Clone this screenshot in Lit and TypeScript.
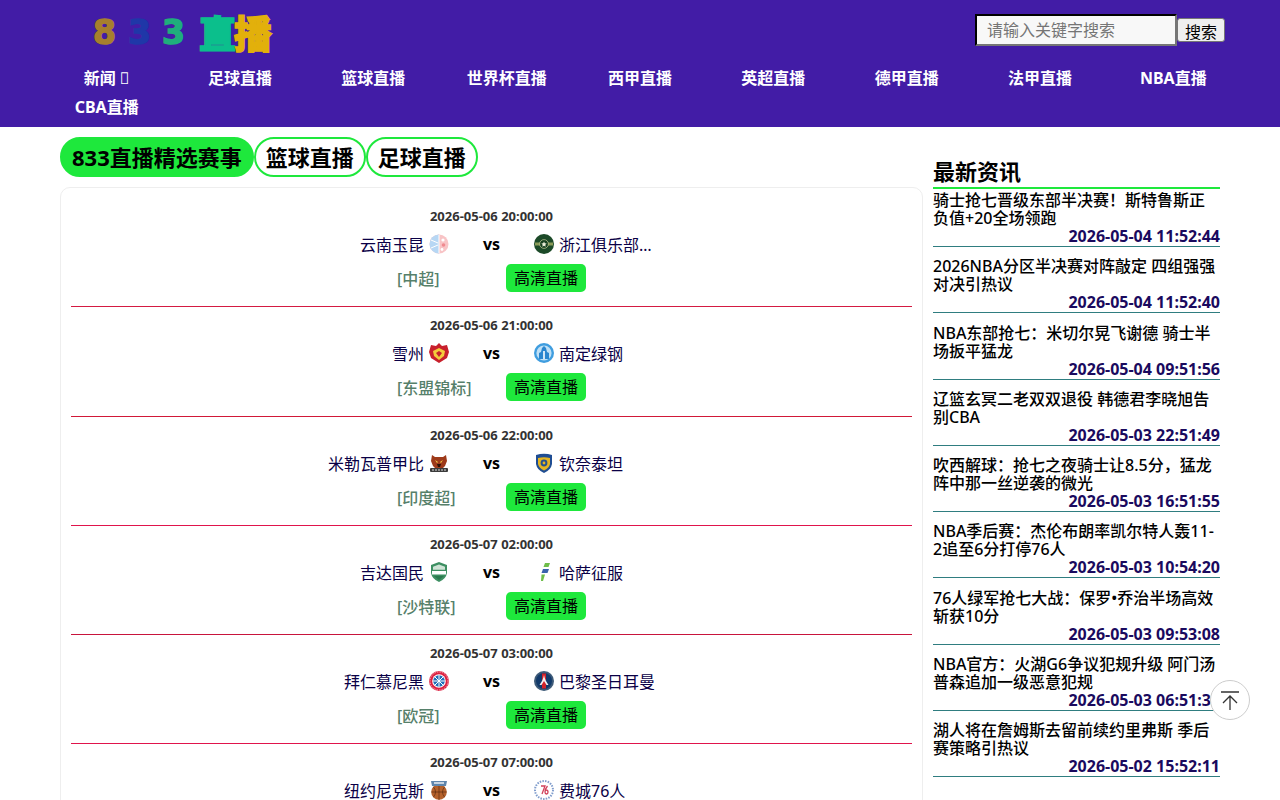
import { LitElement, html, css, svg } from "lit";
import { customElement } from "lit/decorators.js";

const crests: Record<string, unknown> = {
  yunnan: svg`<circle cx="10" cy="10" r="9.5" fill="#f8c4c6"/><path d="M10 .5a9.5 9.5 0 0 0 0 19z" fill="#b7d7f4"/><path d="M10 1v18M2 6l7 3M2 14l7-3" stroke="#fff" fill="none"/><circle cx="14" cy="6" r="1.6" fill="#fff"/><circle cx="14.5" cy="11" r="1.8" fill="#f08a90"/><circle cx="13" cy="15.5" r="1.4" fill="#fff"/>`,
  zhejiang: svg`<circle cx="10" cy="10" r="10" fill="#1c4a28"/><path d="M1 8.5h18v3H1z" fill="#8a9a58"/><circle cx="10" cy="10" r="4.4" fill="#16401f" stroke="#c9cf9a" stroke-width=".7"/><path d="M10 7.5l.8 1.8 1.9.2-1.4 1.3.4 1.9-1.7-1-1.7 1 .4-1.9-1.4-1.3 1.9-.2z" fill="#eef0da"/>`,
  selangor: svg`<path d="M10 0l3 3 5-1 2 7-2 6-8 5-8-5-2-6 2-7 5 1z" fill="#c8202c"/><path d="M10 5l6 3-1 5-5 4-5-4-1-5z" fill="#f3cb3c"/><path d="M10 8l3 2-3 4-3-4z" fill="#c8202c"/>`,
  namdinh: svg`<circle cx="10" cy="10" r="10" fill="#3f9ddf"/><circle cx="10" cy="10" r="7.6" fill="#bfe0f6"/><path d="M5 16V10l2-1 1-4 2-2 2 2 1 4 2 1v6z" fill="#2b86cf"/><path d="M9.2 16V8h1.6v8z" fill="#fff"/>`,
  mumbai: svg`<path d="M3 2l3 2h8l3-2 1 6-2 5-2 2H6l-2-2-2-5z" fill="#9e3a1a"/><path d="M6 7l3 2-1 1zM14 7l-3 2 1 1z" fill="#f5d24a"/><path d="M8 11h4l-1 3H9z" fill="#2a1208"/><rect x="1" y="15" width="18" height="4" rx="1" fill="#3b3b3b"/><path d="M3 17h14" stroke="#ddd" stroke-width="1" stroke-dasharray="2 1"/>`,
  chennai: svg`<path d="M2 2q8-2.5 16 0v9q-1 6-8 9-7-3-8-9z" fill="#1f4d93"/><path d="M4 5q6-1.500 12 0v6q-1 4-6 6.500-5-2.500-6-6.500z" fill="#e5b522"/><circle cx="10" cy="10" r="3.4" fill="#27528f"/><circle cx="10" cy="10" r="1.400" fill="#e5b522"/>`,
  jeddah: svg`<path d="M10 0l8 3v8q-1 6-8 9-7-3-8-9V3z" fill="#3d8f62"/><path d="M10 2.500l6 2.200v3H4v-3z" fill="#cfe3d6"/><rect x="3" y="9" width="14" height="3.500" fill="#fff"/><path d="M5 14h10l-5 4z" fill="#2a7a4e"/>`,
  kazakh: svg`<path d="M11 1h5l-1.500 4H9.500z" fill="#6fbe4a"/><path d="M9 7h6l-1.500 4H7.500z" fill="#3a62ad"/><path d="M7.500 12.500h3.500L9 19H7z" fill="#6fbe4a"/>`,
  bayern: svg`<circle cx="10" cy="10" r="10" fill="#dc1f3f"/><circle cx="10" cy="10" r="6.800" fill="#fff"/><circle cx="10" cy="10" r="5.800" fill="#1f6fb8"/><path d="M10 4.200v11.600M4.200 10h11.600M6 6l8 8M14 6l-8 8" stroke="#fff" stroke-width="1"/><circle cx="10" cy="10" r="9" fill="none" stroke="#f6c8d0" stroke-width=".8" stroke-dasharray="1.500 1"/>`,
  psg: svg`<circle cx="10" cy="10" r="10" fill="#3d5a78"/><circle cx="10" cy="10" r="8" fill="#123a6b"/><path d="M8 2.500h4v15H8z" fill="#d2232a"/><path d="M10 4c-.6 4-2.500 7-4.500 10h2l2.500-4 2.500 4h2C12.500 11 10.600 8 10 4z" fill="#f2f2f2"/>`,
  knicks: svg`<circle cx="10" cy="12" r="7.800" fill="#b5612b"/><path d="M2.500 12h15M10 4v16M4.500 7q4 5 0 10M15.500 7q-4 5 0 10" stroke="#5c2c10" stroke-width=".7" fill="none"/><path d="M2 1h16l-1 5H3z" fill="#5f86ad"/><path d="M5 3h10" stroke="#fff" stroke-width="1.300"/>`,
  sixers: svg`<circle cx="10" cy="10" r="9" fill="#fff" stroke="#7f9ccc" stroke-width="2" stroke-dasharray="1.500 1.200"/><path d="M7 6h4l-3 8M13.500 6q-2.500 3-2.500 6 0 2 1.500 2t1.500-2-2-2" fill="none" stroke="#d1405a" stroke-width="1.300"/>`,
};

const matches = [
  { time: "2026-05-06 20:00:00", home: "云南玉昆", hl: "yunnan", away: "浙江俱乐部绿城", al: "zhejiang", league: "中超", line: "#d41a42" },
  { time: "2026-05-06 21:00:00", home: "雪州", hl: "selangor", away: "南定绿钢", al: "namdinh", league: "东盟锦标", line: "#d11838" },
  { time: "2026-05-06 22:00:00", home: "米勒瓦普甲比", hl: "mumbai", away: "钦奈泰坦", al: "chennai", league: "印度超", line: "#e0144c" },
  { time: "2026-05-07 02:00:00", home: "吉达国民", hl: "jeddah", away: "哈萨征服", al: "kazakh", league: "沙特联", line: "#c8143c" },
  { time: "2026-05-07 03:00:00", home: "拜仁慕尼黑", hl: "bayern", away: "巴黎圣日耳曼", al: "psg", league: "欧冠", line: "#e0144c" },
  { time: "2026-05-07 07:00:00", home: "纽约尼克斯", hl: "knicks", away: "费城76人", al: "sixers", league: "NBA", line: "#e0144c" },
];

const news = [
  ["骑士抢七晋级东部半决赛！斯特鲁斯正负值+20全场领跑", "2026-05-04 11:52:44"],
  ["2026NBA分区半决赛对阵敲定 四组强强对决引热议", "2026-05-04 11:52:40"],
  ["NBA东部抢七：米切尔晃飞谢德 骑士半场扳平猛龙", "2026-05-04 09:51:56"],
  ["辽篮玄冥二老双双退役 韩德君李晓旭告别CBA", "2026-05-03 22:51:49"],
  ["吹西解球：抢七之夜骑士让8.5分，猛龙阵中那一丝逆袭的微光", "2026-05-03 16:51:55"],
  ["NBA季后赛：杰伦布朗率凯尔特人轰11-2追至6分打停76人", "2026-05-03 10:54:20"],
  ["76人绿军抢七大战：保罗•乔治半场高效斩获10分", "2026-05-03 09:53:08"],
  ["NBA官方：火湖G6争议犯规升级 阿门汤普森追加一级恶意犯规", "2026-05-03 06:51:36"],
  ["湖人将在詹姆斯去留前续约里弗斯 季后赛策略引热议", "2026-05-02 15:52:11"],
];

const navItems = ["新闻 \ue6a0", "足球直播", "篮球直播", "世界杯直播", "西甲直播", "英超直播", "德甲直播", "法甲直播", "NBA直播", "CBA直播"];

@customElement("app-root")
export class AppRoot extends LitElement {
  static styles = css`
    :host {
      display: block;
      font-family: "Noto Sans", "Noto Sans CJK SC", sans-serif;
      color: #000;
      background: #fff;
    }

    header {
      background: #421ca6;
      height: 127px;
    }

    .top {
      width: 1160px;
      height: 64px;
      margin: 0 auto;
      display: flex;
      justify-content: space-between;
      align-items: flex-start;
    }

    .logo {
      display: flex;
      align-items: center;
      height: 64px;
      margin-left: 33px;
      font-family: "DejaVu Sans", "Noto Sans CJK SC", sans-serif;
      font-weight: 700;
      font-size: 33px;
      line-height: 1;
    }

    .logo span {
      -webkit-text-stroke: 1.5px currentColor;
    }

    .logo .c1 { color: #a67f2e; width: 35px; }
    .logo .c2 { color: #1f37a8; width: 34px; }
    .logo .c3 { color: #1fae7c; width: 37px; }
    .logo .c4 { color: #0bbf8c; font-family: "Noto Sans CJK SC", sans-serif; font-size: 37px; width: 35px; font-weight: 900; }
    .logo .c5 { color: #e2b00b; font-family: "Noto Sans CJK SC", sans-serif; font-size: 38px; font-weight: 900; }

    .search {
      display: flex;
      align-items: center;
      margin-top: 14px;
      margin-right: -5px;
    }

    .search input {
      box-sizing: border-box;
      width: 202px;
      height: 32px;
      padding: 0 10px;
      border: 2px inset #767676;
      border-top-color: #222;
      border-left-color: #222;
      background: #f8f8f8;
      font: 16px "Noto Sans", "Noto Sans CJK SC", sans-serif;
      outline: none;
    }

    .search button {
      box-sizing: border-box;
      width: 48px;
      height: 24px;
      padding: 0;
      border: 1px solid #767676;
      border-radius: 3px;
      background: #efefef;
      color: #000;
      font: 16px "Noto Sans", "Noto Sans CJK SC", sans-serif;
    }

    nav {
      width: 1200px;
      margin: 0 auto;
      display: grid;
      grid-template-columns: repeat(9, 1fr);
      grid-auto-rows: 29px;
    }

    nav a {
      color: #fff;
      font-size: 16px;
      font-weight: 700;
      line-height: 29px;
      text-align: center;
    }

    .page {
      width: 1160px;
      margin: 10px auto 0;
      display: flex;
      gap: 10px;
      align-items: flex-start;
    }

    .main {
      width: 863px;
      flex: none;
    }

    .tabs {
      display: flex;
      height: 40px;
      margin-bottom: 10px;
    }

    .tab {
      box-sizing: border-box;
      height: 40px;
      padding: 0 10px;
      border: 2px solid #1ee83c;
      border-radius: 20px;
      font-size: 22px;
      font-weight: 700;
      line-height: 36px;
    }

    .tab.on {
      background: #1ee83c;
    }

    .card {
      box-sizing: border-box;
      padding: 10px;
      border: 1px solid #eee;
      border-radius: 10px;
    }

    .match {
      box-sizing: border-box;
      height: 109.25px;
      padding-top: 9px;
      border-bottom: 1px solid;
    }

    .match:last-child {
      border-bottom: none;
    }

    .time {
      height: 18px;
      color: #333;
      font-size: 13px;
      font-weight: 700;
      line-height: 18px;
      text-align: center;
    }

    .teams {
      display: grid;
      grid-template-columns: 1fr 85px 1fr;
      height: 28px;
      margin-top: 5px;
      align-items: center;
      color: #0a0046;
      font-size: 16px;
    }

    .team {
      display: flex;
      align-items: center;
      gap: 5px;
    }

    .team.home {
      justify-content: flex-end;
    }

    .team svg {
      width: 20px;
      height: 20px;
      flex: none;
    }

    .name {
      max-width: 96px;
      overflow: hidden;
      text-overflow: ellipsis;
      white-space: nowrap;
    }

    .vs {
      color: #000;
      font-weight: 700;
      text-align: center;
    }

    .info {
      display: grid;
      grid-template-columns: 1fr 94.5px 94.5px 1fr;
      height: 28px;
      margin-top: 6px;
      align-items: center;
    }

    .league {
      grid-column: 2;
      color: #56806a;
      font-size: 16px;
      font-weight: 500;
      white-space: nowrap;
    }

    .btn {
      grid-column: 3;
      width: 80px;
      margin-left: 14.5px;
      border-radius: 5px;
      background: #1ee83c;
      color: #000;
      font-size: 16px;
      line-height: 28px;
      text-align: center;
    }

    aside {
      width: 287px;
      flex: none;
    }

    aside h2 {
      box-sizing: border-box;
      height: 52px;
      margin: 0;
      padding-top: 18px;
      border-bottom: 2px solid #1ee83c;
      font-size: 22px;
      font-weight: 700;
      line-height: 32px;
    }

    .item {
      box-sizing: border-box;
      height: 66.25px;
      padding-top: 2px;
    }

    .item .t {
      font-size: 16px;
      font-weight: 500;
      line-height: 18px;
    }

    .item .d {
      border-bottom: 1px solid #2f7d80;
      color: #1a0a5e;
      font-size: 16px;
      font-weight: 700;
      line-height: 18px;
      text-align: right;
      padding-bottom: 1px;
    }

    .top-btn {
      position: fixed;
      left: 1210px;
      top: 680px;
      box-sizing: border-box;
      width: 40px;
      height: 40px;
      display: flex;
      align-items: center;
      justify-content: center;
      border: 1px solid #ccc;
      border-radius: 50%;
      background: #fff;
    }
  `;

  private crest(id: string) {
    return html`<svg viewBox="0 0 20 20">${crests[id]}</svg>`;
  }

  protected render() {
    return html`
      <header>
        <div class="top">
          <div class="logo">
            <span class="c1">8</span><span class="c2">3</span><span class="c3">3</span><span class="c4">直</span><span class="c5">播</span>
          </div>
          <div class="search">
            <input placeholder="请输入关键字搜索" />
            <button>搜索</button>
          </div>
        </div>
        <nav>${navItems.map((n) => html`<a>${n}</a>`)}</nav>
      </header>
      <div class="page">
        <div class="main">
          <div class="tabs">
            <div class="tab on">833直播精选赛事</div>
            <div class="tab">篮球直播</div>
            <div class="tab">足球直播</div>
          </div>
          <div class="card">
            ${matches.map(
              (m) => html`
                <div class="match" style="border-color: ${m.line}">
                  <div class="time">${m.time}</div>
                  <div class="teams">
                    <div class="team home"><span class="name">${m.home}</span>${this.crest(m.hl)}</div>
                    <div class="vs">vs</div>
                    <div class="team">${this.crest(m.al)}<span class="name">${m.away}</span></div>
                  </div>
                  <div class="info">
                    <div class="league">[${m.league}]</div>
                    <div class="btn">高清直播</div>
                  </div>
                </div>
              `
            )}
          </div>
        </div>
        <aside>
          <h2>最新资讯</h2>
          ${news.map(
            ([t, d]) => html`
              <div class="item">
                <div class="t">${t}</div>
                <div class="d">${d}</div>
              </div>
            `
          )}
        </aside>
      </div>
      <div class="top-btn">
        <svg width="22" height="22" viewBox="0 0 22 22" fill="none" stroke="#333" stroke-width="1.3">
          <path d="M2 3h18M11 21V7M4 14l7-7 7 7" />
        </svg>
      </div>
    `;
  }
}
